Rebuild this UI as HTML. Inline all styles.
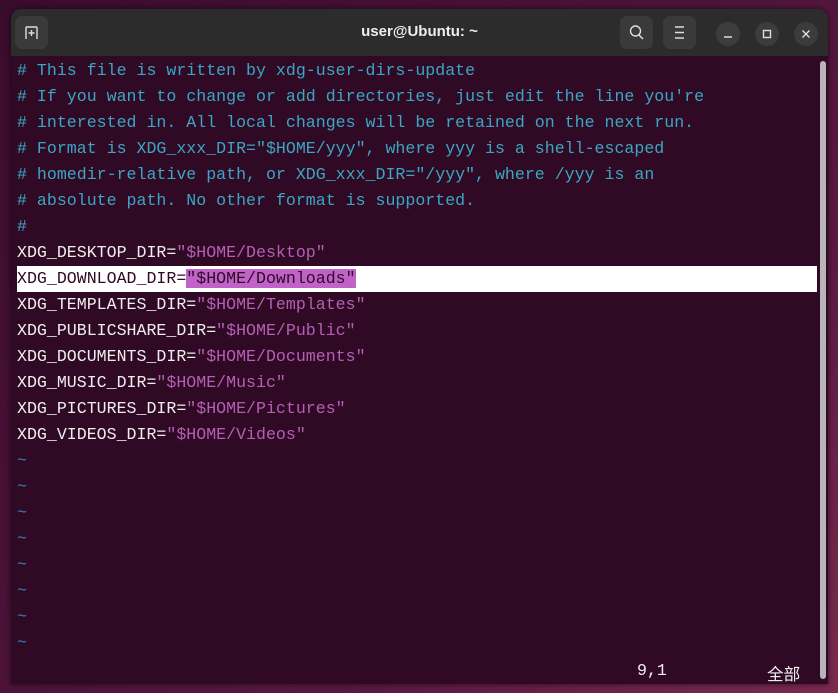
<!DOCTYPE html>
<html><head><meta charset="utf-8"><style>
body{margin:0;width:838px;height:693px;overflow:hidden;background:linear-gradient(135deg,#3a0c2c 0%,#4a1236 40%,#5a1a40 70%,#7a2a50 100%);font-family:"Liberation Sans",sans-serif}
.win{position:absolute;left:11px;top:9px;width:817px;height:675px;border-radius:10px 10px 0 0;overflow:hidden;background:#300a24;box-shadow:0 0 6px rgba(0,0,0,.6)}
.hdr{height:47px;background:#2c2c2c;position:relative;color:#eee}
.title{position:absolute;left:0;right:0;top:14px;text-align:center;font-weight:600;font-size:15px}
.btn{position:absolute;top:7px;width:33px;height:33px;border-radius:7px;background:#3a3a3a}
.cb{position:absolute;top:13px;width:24px;height:24px;border-radius:50%;background:#3c3c3c}
.term{position:absolute;left:6px;top:49px;font-family:"Liberation Mono","Noto Sans CJK SC",monospace;font-size:16.6px;line-height:26px;color:#eeeeee;white-space:pre}
.c{color:#3aa6c4}.s{color:#b45fb4}.t{color:#3d79c8}
.hl{background:#fff;color:#300a24;display:block;width:800px}
.hl .p{background:#c062c8;color:#300a24}
.sb{position:absolute;right:2px;top:52px;width:6px;height:618px;border-radius:3px;background:#b8b4b8}
.st{position:absolute;top:652px;font-family:"Liberation Mono","Noto Sans CJK SC",monospace;font-size:16.6px;color:#eee}
</style></head><body>
<div class="win">
<div class="hdr">
<div class="btn" style="left:4px"><svg width="33" height="33"><path d="M11 23V12q0-1 1-1h9q1 0 1 1v11M16.5 14v6M13.5 17h6" stroke="#ddd" stroke-width="1.4" fill="none"/></svg></div>
<div class="title">user@Ubuntu: ~</div>
<div class="btn" style="left:609px"><svg width="33" height="33"><circle cx="15.5" cy="15" r="5" stroke="#ddd" stroke-width="1.4" fill="none"/><path d="M19 19l4 4" stroke="#ddd" stroke-width="1.5"/></svg></div>
<div class="btn" style="left:652px"><svg width="33" height="33"><path d="M12 11h9M12 16.5h9M12 22h9" stroke="#ddd" stroke-width="1.4"/></svg></div>
<div class="cb" style="left:705px"><svg width="24" height="24"><path d="M8 15h8" stroke="#ddd" stroke-width="1.5"/></svg></div>
<div class="cb" style="left:744px"><svg width="24" height="24"><rect x="8.5" y="8.5" width="7" height="7" stroke="#ddd" stroke-width="1.4" fill="none"/></svg></div>
<div class="cb" style="left:783px"><svg width="24" height="24"><path d="M8.5 8.5l7 7M15.5 8.5l-7 7" stroke="#ddd" stroke-width="1.4"/></svg></div>
</div>
<div class="term"><span class="c"># This file is written by xdg-user-dirs-update
# If you want to change or add directories, just edit the line you're
# interested in. All local changes will be retained on the next run.
# Format is XDG_xxx_DIR="$HOME/yyy", where yyy is a shell-escaped
# homedir-relative path, or XDG_xxx_DIR="/yyy", where /yyy is an
# absolute path. No other format is supported.
#</span>
XDG_DESKTOP_DIR=<span class="s">"$HOME/Desktop"</span>
<span class="hl">XDG_DOWNLOAD_DIR=<span class="p">"$HOME/Downloads"</span></span>XDG_TEMPLATES_DIR=<span class="s">"$HOME/Templates"</span>
XDG_PUBLICSHARE_DIR=<span class="s">"$HOME/Public"</span>
XDG_DOCUMENTS_DIR=<span class="s">"$HOME/Documents"</span>
XDG_MUSIC_DIR=<span class="s">"$HOME/Music"</span>
XDG_PICTURES_DIR=<span class="s">"$HOME/Pictures"</span>
XDG_VIDEOS_DIR=<span class="s">"$HOME/Videos"</span>
<span class="t">~
~
~
~
~
~
~
~</span></div>
<div class="sb"></div>
<div class="st" style="left:626px">9,1</div>
<div class="st" style="left:756px">全部</div>
</div>
</body></html>
